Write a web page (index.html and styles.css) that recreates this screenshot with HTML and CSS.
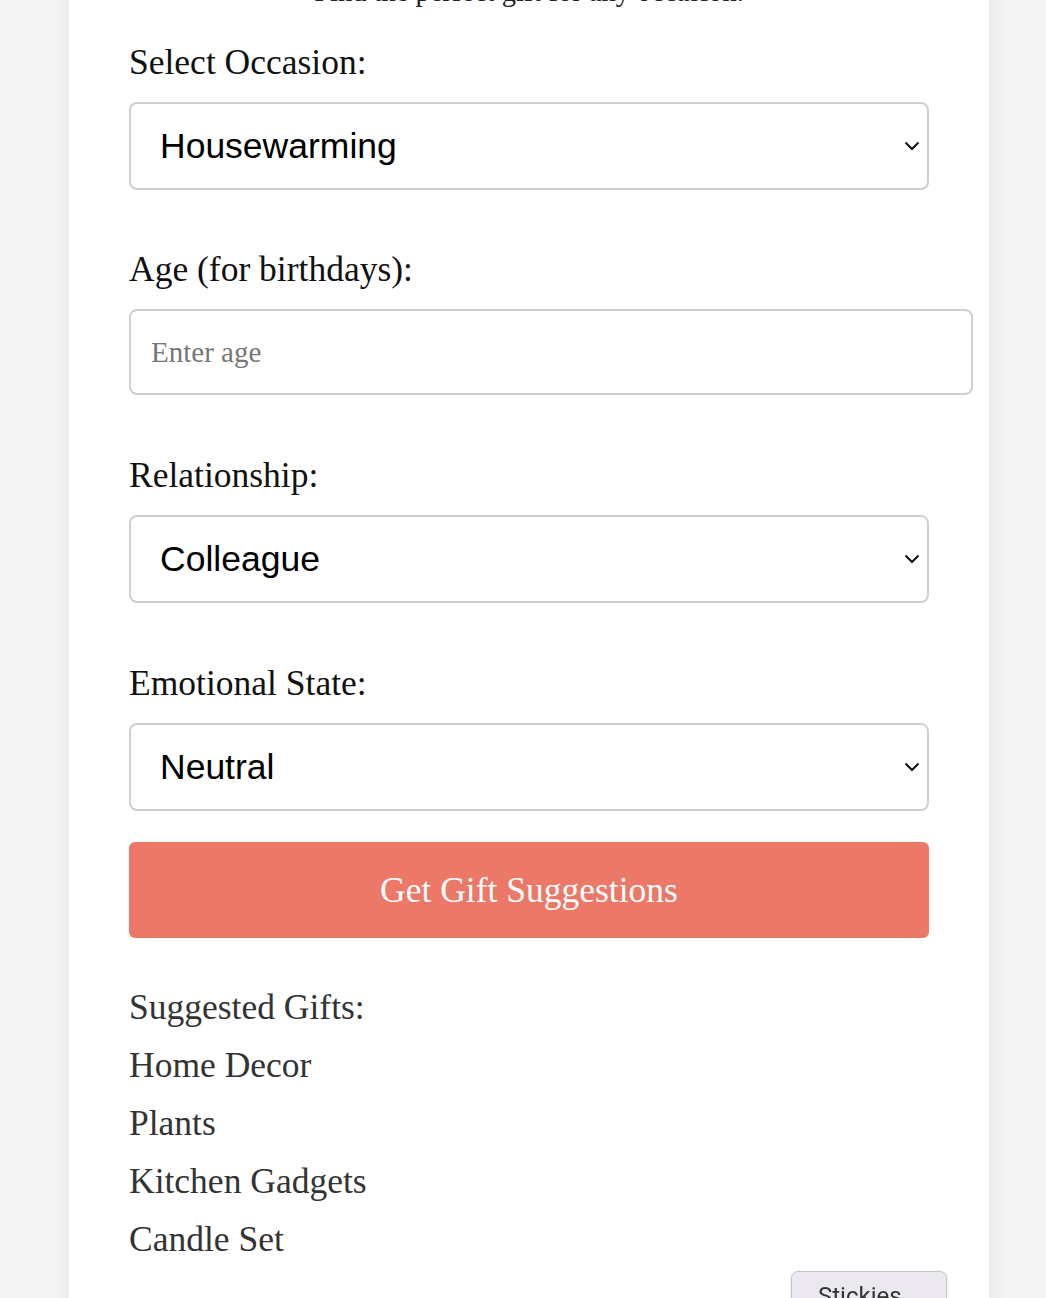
FILE: index.html
```html
<!DOCTYPE html>
<html lang="en">
<head>
<meta charset="utf-8">
<title>Gift Finder</title>
<link rel="stylesheet" href="styles.css">
</head>
<body>
<div class="card">
  <p class="subtitle">Find the perfect gift for any occasion.</p>
  <form class="form">
    <div class="field field-first">
      <label class="label" for="occasion">Select Occasion:</label>
      <div class="select-wrap">
        <select class="select" id="occasion">
          <option>Housewarming</option>
        </select>
        <svg class="chevron" width="16" height="10" viewBox="0 0 16 10"><path d="M1.5 1.5 L8 8 L14.5 1.5" fill="none" stroke="#111" stroke-width="2"/></svg>
      </div>
    </div>
    <div class="field">
      <label class="label" for="age">Age (for birthdays):</label>
      <input class="input" id="age" type="text" placeholder="Enter age">
    </div>
    <div class="field">
      <label class="label" for="rel">Relationship:</label>
      <div class="select-wrap">
        <select class="select" id="rel">
          <option>Colleague</option>
        </select>
        <svg class="chevron" width="16" height="10" viewBox="0 0 16 10"><path d="M1.5 1.5 L8 8 L14.5 1.5" fill="none" stroke="#111" stroke-width="2"/></svg>
      </div>
    </div>
    <div class="field field-last">
      <label class="label" for="emo">Emotional State:</label>
      <div class="select-wrap">
        <select class="select" id="emo">
          <option>Neutral</option>
        </select>
        <svg class="chevron" width="16" height="10" viewBox="0 0 16 10"><path d="M1.5 1.5 L8 8 L14.5 1.5" fill="none" stroke="#111" stroke-width="2"/></svg>
      </div>
    </div>
    <button class="button" type="button">Get Gift Suggestions</button>
  </form>
  <div class="results">
    <p class="result-title">Suggested Gifts:</p>
    <p class="result-item">Home Decor</p>
    <p class="result-item">Plants</p>
    <p class="result-item">Kitchen Gadgets</p>
    <p class="result-item">Candle Set</p>
  </div>
</div>
<button class="stickies" type="button">Stickies</button>
</body>
</html>
```
FILE: styles.css
```css
html, body {
  margin: 0;
  padding: 0;
}
body {
  background: #f4f4f4;
  font-family: "Liberation Serif", "Times New Roman", serif;
  color: #111;
  overflow: hidden;
}
.card {
  box-sizing: border-box;
  width: 920px;
  margin: -25px 0 0 69px;
  padding: 0 60px 80px;
  background: #fff;
  box-shadow: 0 0 20px rgba(0, 0, 0, 0.08);
}
.subtitle {
  margin: 0 0 33px;
  font-size: 28.5px;
  line-height: 34px;
  text-align: center;
  color: #222;
}
.form {
  display: flex;
  flex-direction: column;
}
.field {
  display: flex;
  flex-direction: column;
  align-items: flex-start;
  margin-bottom: 60px;
}
.field-first {
  margin-bottom: 59px;
}
.field-last {
  margin-bottom: 31px;
}
.label {
  display: block;
  font-size: 35.5px;
  line-height: 40px;
  margin-bottom: 20px;
  color: #111;
}
.select-wrap {
  position: relative;
  width: 800px;
}
.select {
  -webkit-appearance: none;
  appearance: none;
  display: block;
  box-sizing: border-box;
  width: 800px;
  height: 88px;
  margin: 0;
  padding: 0 40px 0 29px;
  border: 2px solid #cfcfcf;
  border-radius: 8px;
  background: #fff;
  font-family: "Liberation Sans", Arial, sans-serif;
  font-size: 35.5px;
  color: #000;
}
.chevron {
  position: absolute;
  right: 9px;
  top: 39px;
}
.input {
  display: block;
  box-sizing: content-box;
  width: 800px;
  height: 82px;
  margin: 0;
  padding: 0 20px;
  border: 2px solid #cfcfcf;
  border-radius: 8px;
  background: #fff;
  font-family: "Liberation Serif", "Times New Roman", serif;
  font-size: 29px;
  color: #111;
}
.input::placeholder {
  color: #777;
}
.button {
  display: block;
  width: 800px;
  height: 96px;
  margin: 0;
  border: none;
  border-radius: 6px;
  background: #ec7868;
  color: #fff;
  font-family: "Liberation Serif", "Times New Roman", serif;
  font-size: 35.5px;
  cursor: pointer;
}
.results {
  display: flex;
  flex-direction: column;
  gap: 20px;
  margin-top: 50px;
}
.result-title,
.result-item {
  margin: 0;
  font-size: 35.5px;
  line-height: 38px;
  color: #333;
}
.stickies {
  position: fixed;
  left: 791px;
  top: 1271px;
  width: 156px;
  margin: 0;
  padding: 10px 0 20px 26px;
  text-align: left;
  box-sizing: border-box;
  border: 1px solid #c6c6c6;
  border-radius: 7px;
  background: #ebe9ef;
  box-shadow: 0 1px 3px rgba(0, 0, 0, 0.15);
  font-family: Roboto, "Liberation Sans", sans-serif;
  font-size: 24px;
  line-height: 28px;
  color: #333;
  display: block;
}
```
